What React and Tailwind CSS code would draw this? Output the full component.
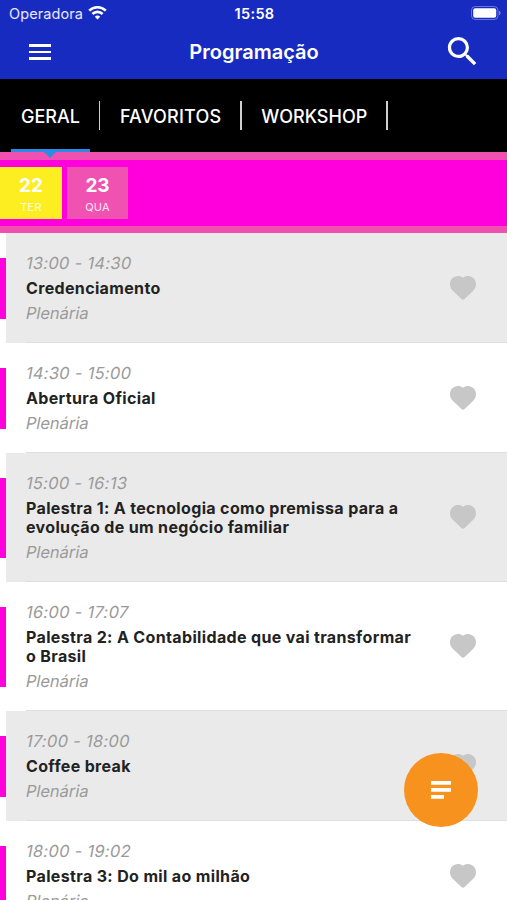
import React, { useState } from 'react';
import { MdSearch } from 'react-icons/md';

const tabs = ['GERAL', 'FAVORITOS', 'WORKSHOP'];

const days = [
    { number: '22', weekday: 'TER' },
    { number: '23', weekday: 'QUA' },
];

const sessions = [
    { time: '13:00 - 14:30', title: ['Credenciamento'], place: 'Plenária' },
    { time: '14:30 - 15:00', title: ['Abertura Oficial'], place: 'Plenária' },
    { time: '15:00 - 16:13', title: ['Palestra 1: A tecnologia como premissa para a', 'evolução de um negócio familiar'], place: 'Plenária' },
    { time: '16:00 - 17:07', title: ['Palestra 2: A Contabilidade que vai transformar', 'o Brasil'], place: 'Plenária' },
    { time: '17:00 - 18:00', title: ['Coffee break'], place: 'Plenária' },
    { time: '18:00 - 19:02', title: ['Palestra 3: Do mil ao milhão'], place: 'Plenária' },
];

const WifiIcon = () => (
    <svg className="mb-[2px] ml-[5px] h-[15px] w-[19px]" viewBox="0 0 19 15" fill="none" stroke="white" strokeWidth="2.6">
        <path d="M1.2 5.7a11.7 11.7 0 0 1 16.6 0" />
        <path d="M4.4 9a7.2 7.2 0 0 1 10.2 0" />
        <path d="M9.5 14.6 6.8 11.8a3.9 3.9 0 0 1 5.4 0z" fill="white" stroke="none" />
    </svg>
);

const BatteryIcon = () => (
    <svg className="mb-[2px] h-[14px] w-[30px]" viewBox="0 0 30 14">
        <rect x="0.5" y="0.5" width="26.5" height="13" rx="3.8" fill="none" stroke="white" strokeOpacity="0.35" />
        <rect x="2.2" y="2.2" width="23" height="9.6" rx="2" fill="white" />
        <path d="M28.2 4.8c1.8.7 1.8 3.7 0 4.4z" fill="white" fillOpacity="0.5" />
    </svg>
);

const HeartIcon = () => (
    <svg className="h-6 w-[26px]" viewBox="0 0 26 24" fill="#c7c7c7">
        <path d="M13 1.7C11.6.6 9.8 0 8 0 3.4 0 0 3.6 0 8.2c0 2.7 1.1 4.8 3 6.7l8.4 8.2c.9.9 2.3.9 3.2 0l8.4-8.2c1.9-1.9 3-4 3-6.7C26 3.6 22.6 0 18 0c-1.8 0-3.6.6-5 1.7z" />
    </svg>
);

const StatusBar = () => (
    <div className="grid h-[27px] grid-cols-3 items-center pl-[9px] pr-[6px] text-white">
        <div className="flex items-center text-[14.5px] tracking-[0.1px] text-white/90">
            Operadora
            <WifiIcon />
        </div>
        <div className="pr-[1px] text-center text-[14.5px] font-semibold tracking-[0.3px]">15:58</div>
        <div className="flex justify-end">
            <BatteryIcon />
        </div>
    </div>
);

const SessionRow = ({ session, shaded }) => (
    <li className="flex items-stretch">
        <div className="my-[24.5px] w-1.5 shrink-0 bg-[#ff00dc]" />
        <div className={`flex flex-1 pl-5 ${shaded ? 'bg-[#eaeaea]' : 'bg-white'}`}>
            <div className="flex flex-1 items-center border-b border-[#dfdfdf] pr-[31px]">
                <div className="flex-1 pb-[19.5px] pt-[20.5px] leading-[19px]">
                    <p className="origin-left -skew-x-[11deg] text-[16.5px] tracking-[0.28px] text-[#9a9a9a]">{session.time}</p>
                    <h2 className="my-1.5 whitespace-nowrap text-[16px] font-bold tracking-[0.35px] text-[#222222]">
                        {session.title.map((line) => (
                            <span key={line} className="block">{line}</span>
                        ))}
                    </h2>
                    <p className="origin-left -skew-x-[11deg] text-[16.5px] text-[#9a9a9a]">{session.place}</p>
                </div>
                <button aria-label="Favoritar">
                    <HeartIcon />
                </button>
            </div>
        </div>
    </li>
);

export default function App() {
    const [activeTab, setActiveTab] = useState('GERAL');
    const [activeDay, setActiveDay] = useState('22');

    return (
        <div className="relative flex h-[900px] w-[507px] flex-col overflow-hidden bg-white font-['Inter',sans-serif]">
            {/* Header */}
            <header className="h-[79px] shrink-0 bg-[#182bc0]">
                <StatusBar />
                <div className="grid h-[50px] grid-cols-[1fr_auto_1fr] items-center pl-[27px] pr-[26px] text-white">
                    <button aria-label="Menu" className="ml-[2px] flex w-[22px] flex-col gap-[4px]">
                        <span className="h-[2.5px] bg-white" />
                        <span className="h-[2.5px] bg-white" />
                        <span className="h-[2.5px] bg-white" />
                    </button>
                    <h1 className="text-[20px] font-semibold">Programação</h1>
                    <button aria-label="Buscar" className="-mr-px mb-px justify-self-end">
                        <MdSearch className="size-[39px]" />
                    </button>
                </div>
            </header>

            {/* Tabs */}
            <nav className="flex h-[73px] shrink-0 bg-black pl-[11px] text-[18px] font-medium text-white">
                {tabs.map((tab) => (
                    <div key={tab} className="flex items-center">
                        <button onClick={() => setActiveTab(tab)} className={`relative h-full px-[10px] pt-[2px] ${tab === 'FAVORITOS' ? 'tracking-[0.2px]' : ''}`}>
                            {tab}
                            {activeTab === tab && (
                                <span className="absolute inset-x-0 bottom-0 z-10 h-[3px] bg-[#2b8ce6]">
                                    <svg className="absolute left-1/2 top-[3px] h-[6px] w-[12px] -translate-x-1/2" viewBox="0 0 12 6">
                                        <path d="M0 0h12L6 6z" fill="#2b8ce6" />
                                    </svg>
                                </span>
                            )}
                        </button>
                        <span className="ml-[9px] mr-[9.5px] h-[29px] w-[1.5px] bg-[#d0d0d0]" />
                    </div>
                ))}
            </nav>

            {/* Days */}
            <div className="flex h-[81px] shrink-0 items-center gap-[5px] border-b-[7px] border-t-8 border-[#f050b0] bg-[#ff00dc]">
                {days.map((day) => (
                    <button
                        key={day.number}
                        onClick={() => setActiveDay(day.number)}
                        className={`flex h-[52px] flex-col items-center text-white ${day.number === '22' ? 'w-[62px]' : 'w-[61px]'} ${activeDay === day.number ? 'bg-[#fcee21]' : 'bg-[#f052b2]'}`}
                    >
                        <span className="mt-[8px] text-[19px] font-bold leading-[22px]">{day.number}</span>
                        <span className="mt-[3px] text-[11px] leading-[14px] tracking-[0.2px] opacity-85">{day.weekday}</span>
                    </button>
                ))}
            </div>

            {/* Sessions */}
            <ul>
                {sessions.map((session, index) => (
                    <SessionRow key={session.time} session={session} shaded={index % 2 === 0} />
                ))}
            </ul>

            {/* Floating filter button */}
            <button
                aria-label="Filtrar"
                className="absolute bottom-[73px] right-[29px] flex size-[74px] items-center justify-center rounded-full bg-[#f7921e]"
            >
                <svg className="h-[18px] w-[20px]" viewBox="0 0 20 18" fill="white">
                    <path d="M0 0h20v3.8H0zM0 7h20v3.8H0zM0 14h13v3.8H0z" />
                </svg>
            </button>
        </div>
    );
}
